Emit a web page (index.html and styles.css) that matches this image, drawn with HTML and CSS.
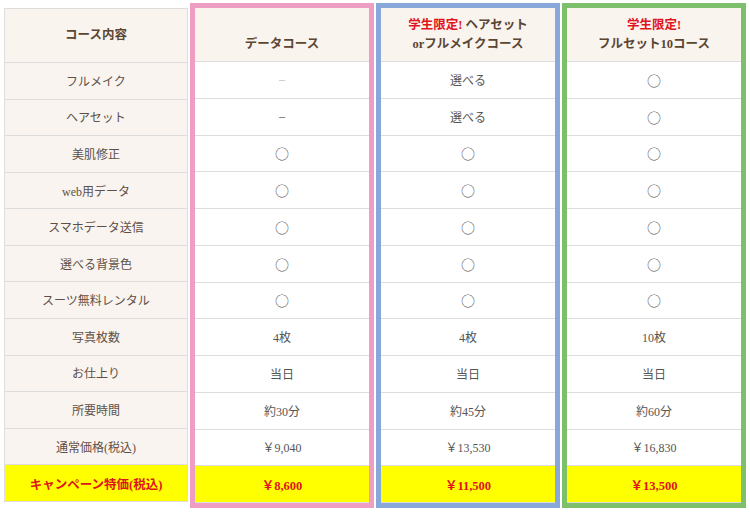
FILE: index.html
```html
<!DOCTYPE html>
<html lang="ja">
<head>
    <meta charset="UTF-8">
    <title>コース比較</title>
    <link rel="stylesheet" href="styles.css">
</head>
<body>

    <div class="compare">
        <!-- Labels -->
        <div class="col col-label">
            <div class="cell head">コース内容</div>
            <div class="cell">フルメイク</div>
            <div class="cell">ヘアセット</div>
            <div class="cell">美肌修正</div>
            <div class="cell">web用データ</div>
            <div class="cell">スマホデータ送信</div>
            <div class="cell">選べる背景色</div>
            <div class="cell">スーツ無料レンタル</div>
            <div class="cell">写真枚数</div>
            <div class="cell">お仕上り</div>
            <div class="cell">所要時間</div>
            <div class="cell">通常価格(税込)</div>
            <div class="cell sale">キャンペーン特価(税込)</div>
        </div>

        <!-- Data course -->
        <div class="plan plan-pink">
            <div class="col">
                <div class="cell head"><span>&nbsp;</span><span>データコース</span></div>
                <div class="cell faint">–</div>
                <div class="cell">–</div>
                <div class="cell ok">○</div>
                <div class="cell ok">○</div>
                <div class="cell ok">○</div>
                <div class="cell ok">○</div>
                <div class="cell ok">○</div>
                <div class="cell">4枚</div>
                <div class="cell">当日</div>
                <div class="cell">約30分</div>
                <div class="cell">￥9,040</div>
                <div class="cell sale">￥8,600</div>
            </div>
        </div>

        <!-- Hair set or full make -->
        <div class="plan plan-blue">
            <div class="col">
                <div class="cell head"><span><em>学生限定!</em> ヘアセット</span><span>orフルメイクコース</span></div>
                <div class="cell">選べる</div>
                <div class="cell">選べる</div>
                <div class="cell ok">○</div>
                <div class="cell ok">○</div>
                <div class="cell ok">○</div>
                <div class="cell ok">○</div>
                <div class="cell ok">○</div>
                <div class="cell">4枚</div>
                <div class="cell">当日</div>
                <div class="cell">約45分</div>
                <div class="cell">￥13,530</div>
                <div class="cell sale">￥11,500</div>
            </div>
        </div>

        <!-- Full set 10 -->
        <div class="plan plan-green">
            <div class="col">
                <div class="cell head"><span><em>学生限定!</em></span><span>フルセット10コース</span></div>
                <div class="cell ok">○</div>
                <div class="cell ok">○</div>
                <div class="cell ok">○</div>
                <div class="cell ok">○</div>
                <div class="cell ok">○</div>
                <div class="cell ok">○</div>
                <div class="cell ok">○</div>
                <div class="cell">10枚</div>
                <div class="cell">当日</div>
                <div class="cell">約60分</div>
                <div class="cell">￥16,830</div>
                <div class="cell sale">￥13,500</div>
            </div>
        </div>
    </div>

</body>
</html>
```

FILE: styles.css
```css
body {
    margin: 0;
    background: #ffffff;
    font-family: "Liberation Serif", "Noto Sans CJK JP", serif;
    color: #555555;
}

.compare {
    display: flex;
    align-items: flex-start;
    gap: 2px;
    padding: 3px 0 0 4px;
}

.col {
    display: grid;
    grid-template-rows: 54px repeat(12, 1fr);
    height: 495px;
    background: #ffffff;
}

.col-label {
    width: 182px;
    margin-top: 5px;
    height: 493px;
    border: 1px solid #dddddd;
    border-bottom: none;
    background: #f9f4ef;
}

.cell {
    display: flex;
    justify-content: center;
    align-items: center;
    border-bottom: 1px solid #dddddd;
    font-size: 12px;
    color: #555555;
}

.col-label .cell {
    color: #5e5048;
}

.head {
    flex-direction: column;
    background: #faf4ef;
    font-size: 12.5px;
    font-weight: bold;
    color: #5b4634;
    line-height: 19px;
}

.col-label .head {
    color: #5b4634;
}

.head em {
    font-style: normal;
    color: #e0141b;
}

/* circle mark */
.ok {
    font-family: "Noto Sans CJK JP", sans-serif;
    font-size: 14px;
    color: #555555;
}

.faint {
    color: #bbbbbb;
}

.sale {
    background: #ffff00;
    color: #e0141b;
    font-weight: bold;
    font-size: 12.5px;
}

.col-label .sale {
    color: #e0141b;
}

/* Colored plan frames */
.plan {
    width: 174px;
    border: 5px solid;
}

.plan-pink { border-color: #ee9dc3; }
.plan-blue { border-color: #87a8d8; }
.plan-green { border-color: #7dbf6a; }
```
